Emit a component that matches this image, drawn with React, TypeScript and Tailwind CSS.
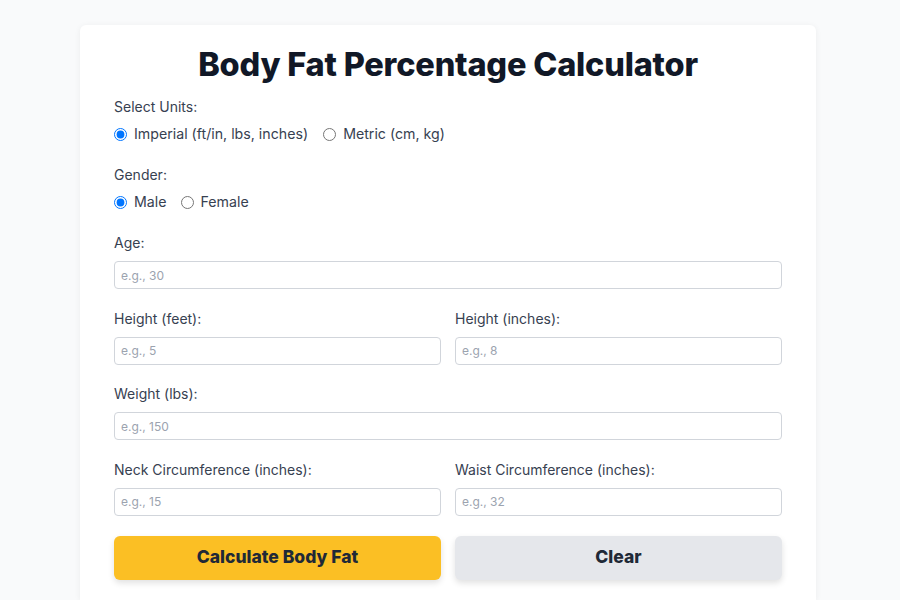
import React from "react";

const font = { fontFamily: "Inter, 'Noto Sans', sans-serif" };

function Field({ label, placeholder }: { label: string; placeholder: string }) {
  return (
    <div className="flex flex-col">
      <label className="text-[14px] leading-[20px] text-[#374151] mb-[8px]">{label}</label>
      <input
        type="text"
        placeholder={placeholder}
        className="h-[28px] w-full rounded-[4px] border border-[#d1d5db] bg-white px-[6px] text-[12px] text-[#111827] placeholder:text-[#9ca3af] outline-none"
      />
    </div>
  );
}

function Radio({ name, label, checked }: { name: string; label: string; checked?: boolean }) {
  return (
    <label className="flex items-center gap-[7px] text-[14.2px] leading-[20px] text-[#374151]">
      <input type="radio" name={name} defaultChecked={checked} className="m-0 h-[13px] w-[13px] accent-[#0075ff]" />
      {label}
    </label>
  );
}

export default function App() {
  return (
    <div className="min-h-[600px] w-full bg-[#f9fafb] pt-[25px]" style={font}>
      <div className="ml-[80px] w-[736px] rounded-t-[6px] bg-white px-[34px] pt-[20px] pb-[20px] shadow-[0_1px_6px_rgba(0,0,0,0.06)]">
        <h1 className="text-center text-[32.5px] font-extrabold leading-[40px] tracking-[-0.2px] text-[#111827]">
          Body Fat Percentage Calculator
        </h1>
        <div className="mt-[12px] flex flex-col">
          <div className="text-[14px] leading-[20px] text-[#374151]">Select Units:</div>
          <div className="mt-[7px] flex items-center gap-[15px]">
            <Radio name="units" label="Imperial (ft/in, lbs, inches)" checked />
            <Radio name="units" label="Metric (cm, kg)" />
          </div>
          <div className="mt-[21px] text-[14px] leading-[20px] text-[#374151]">Gender:</div>
          <div className="mt-[7px] flex items-center gap-[14px]">
            <Radio name="gender" label="Male" checked />
            <Radio name="gender" label="Female" />
          </div>
          <div className="mt-[21px] flex flex-col gap-[19.5px]">
            <Field label="Age:" placeholder="e.g., 30" />
            <div className="grid grid-cols-2 gap-[14px]">
              <Field label="Height (feet):" placeholder="e.g., 5" />
              <Field label="Height (inches):" placeholder="e.g., 8" />
            </div>
            <Field label="Weight (lbs):" placeholder="e.g., 150" />
            <div className="grid grid-cols-2 gap-[14px]">
              <Field label="Neck Circumference (inches):" placeholder="e.g., 15" />
              <Field label="Waist Circumference (inches):" placeholder="e.g., 32" />
            </div>
          </div>
          <div className="mt-[20px] grid grid-cols-2 gap-[14px]">
            <button className="h-[44px] rounded-[6px] bg-[#fbbf24] text-[17.5px] font-extrabold text-[#1f2937] shadow-[0_3px_6px_rgba(0,0,0,0.12)]">
              Calculate Body Fat
            </button>
            <button className="h-[44px] rounded-[6px] bg-[#e5e7eb] text-[17.5px] font-extrabold text-[#1f2937] shadow-[0_3px_6px_rgba(0,0,0,0.12)]">
              Clear
            </button>
          </div>
        </div>
      </div>
    </div>
  );
}
